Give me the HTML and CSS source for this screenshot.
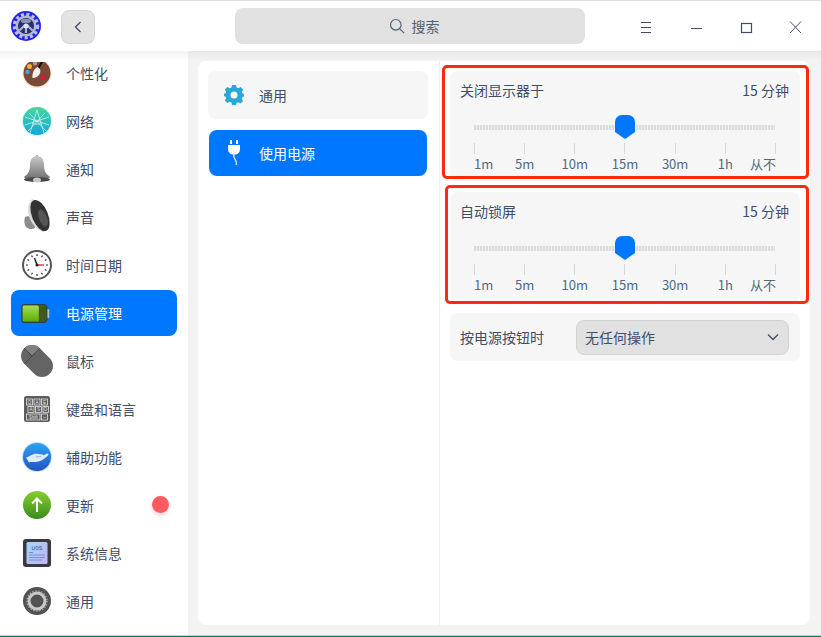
FILE: index.html
```html
<!DOCTYPE html>
<html lang="zh-CN">
  <head>
    <meta charset="UTF-8" />
    <title>控制中心</title>
    <link rel="stylesheet" href="styles.css">
  </head>
  <body>
    <div class="window">
      <!-- Title bar -->
      <div class="titlebar">
        <svg class="logo" viewBox="0 0 30 30">
          <circle cx="15" cy="15" r="15" fill="#2323e6"/>
          <circle cx="15" cy="15" r="11.500" fill="none" stroke="#b9bdf0" stroke-width="3.500" stroke-dasharray="3 2.420"/>
          <circle cx="15" cy="15" r="10.500" fill="#b4b7d2"/>
          <circle cx="15" cy="15" r="8" fill="#27306e"/>
          <ellipse cx="15" cy="10" rx="5" ry="2.200" fill="#8b91bd"/>
          <path d="M14 14 8.500 19.500M16 14 21.500 19.500M15 15v7" stroke="#aeb2d0" stroke-width="2.200"/>
          <circle cx="15" cy="15" r="2.500" fill="#e2e3ef"/>
        </svg>
        <button class="back-btn">
          <svg width="10" height="14" viewBox="0 0 10 14"><path d="M7.500 2 2.500 7l5 5" fill="none" stroke="#414d68" stroke-width="1.300"/></svg>
        </button>
        <div class="search">
          <svg width="16" height="16" viewBox="0 0 16 16"><circle cx="6.800" cy="6.800" r="5.300" fill="none" stroke="#526070" stroke-width="1.200"/><path d="m10.800 10.800 4.400 4.400" stroke="#526070" stroke-width="1.200"/></svg>
          <span>搜索</span>
        </div>
        <div class="win-buttons">
          <svg width="50" height="50" viewBox="0 0 50 50"><path d="M20 21.500h10M20 26.500h10M20 31.500h10" stroke="#414d68" stroke-width="1"/></svg>
          <svg width="50" height="50" viewBox="0 0 50 50"><path d="M20 27.500h11" stroke="#414d68" stroke-width="1"/></svg>
          <svg width="50" height="50" viewBox="0 0 50 50"><rect x="20.500" y="22.500" width="10" height="9" fill="none" stroke="#414d68" stroke-width="1.200"/></svg>
          <svg width="50" height="50" viewBox="0 0 50 50"><path d="m19 20.500 11 11.500M30 20.500 19 32" stroke="#414d68" stroke-width="1"/></svg>
        </div>
      </div>

      <div class="main">
        <!-- Sidebar -->
        <div class="sidebar">
          <div class="nav-item">
            <svg class="nav-icon" viewBox="0 0 28 28">
              <circle cx="14" cy="14.500" r="14.500" fill="#f3c9b0" opacity=".5"/>
              <circle cx="14" cy="14" r="13.500" fill="#7b4a35"/>
              <circle cx="6.500" cy="7.500" r="2.500" fill="#f2b13c"/><circle cx="4.500" cy="13" r="2.300" fill="#4d9be8"/><circle cx="20" cy="18" r="2.500" fill="#d9183c"/><circle cx="12" cy="4.500" r="2" fill="#b89a84"/>
              <path d="M21 -1 15.500 9" stroke="#111" stroke-width="2"/>
              <path d="M14.500 8c3.500 1.500 3.500 5 1.500 8-1.500 2-5 3.500-6.500 3-.5-3 .5-9 5-11Z" fill="#f4f1ec"/>
            </svg>
            <span>个性化</span>
          </div>
          <div class="nav-item">
            <svg class="nav-icon" viewBox="0 0 28 28">
              <defs><linearGradient id="net" x1="0" y1="0" x2="0" y2="1"><stop offset="0" stop-color="#45d89a"/><stop offset="1" stop-color="#12a8dc"/></linearGradient></defs>
              <circle cx="14" cy="14.500" r="15" fill="#7fdcf5" opacity=".35"/>
              <circle cx="14" cy="14" r="14" fill="url(#net)"/>
              <path d="M14 3 7 26M14 3l7 23M2 10l24 8M26 10 2 18M5 24 22 6M23 24 6 6M9 17h10" stroke="#dff8f2" stroke-width=".7" fill="none"/>
            </svg>
            <span>网络</span>
          </div>
          <div class="nav-item">
            <svg class="nav-icon" viewBox="0 0 28 28">
              <defs><linearGradient id="bell" x1="0" y1="0" x2="0" y2="1"><stop offset="0" stop-color="#c9c9c9"/><stop offset="1" stop-color="#6c6c6c"/></linearGradient></defs>
              <circle cx="14" cy="1.500" r="1.500" fill="#9a9a9a"/>
              <path d="M14 1c-5 0-7 4-7 9 0 6-2 9-6 12 0 1.500 6 3 13 3s13-1.500 13-3c-4-3-6-6-6-12 0-5-2-9-7-9Z" fill="url(#bell)"/>
              <ellipse cx="14" cy="24.500" rx="13" ry="2.500" fill="#4a4a4a"/>
              <ellipse cx="14" cy="25" rx="4" ry="2.500" fill="#c7c7c7"/>
            </svg>
            <span>通知</span>
          </div>
          <div class="nav-item">
            <svg class="nav-icon" viewBox="0 0 28 28">
              <path d="M2 14c2-1 5-1 8 1l2 10c-3 2-7 1-9-1-2-3-2-7-1-10Z" fill="#8d8d8d"/>
              <path d="M9 -4C4 2 4 11 8 18c3 6 8 10 13 11l5-6C26 10 18-1 9-4Z" fill="#d8d8d8"/>
              <ellipse cx="17" cy="12.500" rx="8" ry="16.500" transform="rotate(-22 17 12.500)" fill="#333"/>
              <ellipse cx="20" cy="15" rx="4" ry="9" transform="rotate(-22 20 15)" fill="#555"/>
            </svg>
            <span>声音</span>
          </div>
          <div class="nav-item">
            <svg class="nav-icon nav-icon-lg" viewBox="0 0 30 30">
              <circle cx="15" cy="15" r="14" fill="#fdfdfd" stroke="#555" stroke-width="2"/>
              <path d="M15 4v2M15 24v2M4 15h2M24 15h2M9.500 5.500l1 1.700M20.500 5.500l-1 1.700M9.500 24.500l1-1.700M20.500 24.500l-1-1.700M5.500 9.500l1.700 1M24.500 9.500l-1.700 1M5.500 20.500l1.700-1M24.500 20.500l-1.700-1" stroke="#333" stroke-width="1.200"/>
              <path d="M15 15 12.500 8" stroke="#222" stroke-width="1.500"/>
              <path d="M15 15h7" stroke="#ee3b3b" stroke-width="1.500"/>
              <circle cx="15" cy="15" r="1.500" fill="#222"/>
            </svg>
            <span>时间日期</span>
          </div>
          <div class="nav-item active">
            <svg class="nav-icon battery" viewBox="0 0 30 20">
              <defs><linearGradient id="charge" x1="0" y1="0" x2="0" y2="1"><stop offset="0" stop-color="#a6dc55"/><stop offset="1" stop-color="#5cae06"/></linearGradient></defs>
              <rect x="26" y="5.500" width="3.500" height="9" fill="#b7bcc4"/>
              <rect x=".5" y=".5" width="26.500" height="19" rx="3" fill="#3f5a1c" stroke="#2c3d4a"/>
              <rect x="1.500" y="1.500" width="17" height="17" rx="1.500" fill="url(#charge)"/>
            </svg>
            <span>电源管理</span>
          </div>
          <div class="nav-item">
            <svg class="nav-icon" viewBox="0 0 28 28">
              <g transform="rotate(45 14 14)">
                <rect x="-4" y="3" width="36" height="22" rx="11" fill="#646464"/>
                <path d="M7 3H7a11 11 0 0 0-11 11v0H7Z M7 3v11h0V3Z" fill="#808080"/>
                <path d="M7 25V3M-4 14H7" stroke="#3d3d3d" stroke-width=".8"/>
              </g>
            </svg>
            <span>鼠标</span>
          </div>
          <div class="nav-item">
            <svg class="nav-icon" viewBox="0 0 28 28">
              <rect x="1" y="1" width="26" height="26" rx="2.500" fill="#5c5c5c"/>
              <g fill="none" stroke="#e4e4e4" stroke-width=".8">
                <rect x="3.500" y="4" width="6" height="6"/><rect x="11" y="4" width="6" height="6"/><rect x="18.500" y="4" width="6" height="6"/>
                <rect x="5" y="11.500" width="6" height="6"/><rect x="12.500" y="11.500" width="6" height="6"/><rect x="20" y="11.500" width="5.500" height="6"/>
                <rect x="3.500" y="19" width="13.500" height="6"/><rect x="18.500" y="19" width="6" height="6"/>
              </g>
              <g class="key-text">
                <text x="6.500" y="8.800">Q</text><text x="14" y="8.800">A</text><text x="21.500" y="8.800">E</text>
                <text x="8" y="16.300">A</text><text x="15.500" y="16.300">S</text><text x="22.700" y="16.300">D</text>
                <text x="10.200" y="23.800">Shift</text><text x="21.500" y="23.800">~</text>
              </g>
            </svg>
            <span>键盘和语言</span>
          </div>
          <div class="nav-item">
            <svg class="nav-icon nav-icon-lg" viewBox="0 0 30 30">
              <defs><linearGradient id="hand" x1="0" y1="0" x2="0" y2="1"><stop offset="0" stop-color="#2ea3f2"/><stop offset="1" stop-color="#2352c4"/></linearGradient></defs>
              <circle cx="15" cy="15" r="15" fill="#7fc0fa" opacity=".5"/>
              <circle cx="15" cy="15" r="14" fill="url(#hand)"/>
              <path d="M4 15.500c3-.5 5-3 8-3.500 3-.5 5 .5 8 .5 2 0 1.500 2-1 2l-5 .3 5-.3 6-3c1.500-.5 2 1 1 2-3 3-7 6-12 6.500-3 .3-5-.5-7 .5Z" fill="#dcecfb"/>
              <path d="M14 14.800c2 .2 3.500 0 5-.3" fill="none" stroke="#5b9be0" stroke-width=".7"/>
            </svg>
            <span>辅助功能</span>
          </div>
          <div class="nav-item">
            <svg class="nav-icon" viewBox="0 0 28 28">
              <defs><linearGradient id="upd" x1="0" y1="0" x2="0" y2="1"><stop offset="0" stop-color="#86d02e"/><stop offset="1" stop-color="#3a8a1d"/></linearGradient></defs>
              <circle cx="14" cy="14" r="14" fill="url(#upd)"/>
              <path d="M14 21V8M9 12.500 14 7.500l5 5" fill="none" stroke="#fff" stroke-width="2"/>
            </svg>
            <span>更新</span>
            <i class="badge"></i>
          </div>
          <div class="nav-item">
            <svg class="nav-icon" viewBox="0 0 28 28">
              <defs><linearGradient id="uos" x1="0" y1="0" x2="1" y2="1"><stop offset="0" stop-color="#9fd6f4"/><stop offset="1" stop-color="#c5b5f5"/></linearGradient></defs>
              <rect width="28" height="28" rx="3" fill="#3a3a3e"/>
              <rect x="3.500" y="3" width="21" height="22" rx="1.500" fill="url(#uos)"/>
              <text x="14" y="10.500" class="uos-text">UOS</text>
              <path d="M6 13.500h4M6 16h16M6 18.500h16M6 21h13" stroke="#5b7bbd" stroke-width=".7"/>
            </svg>
            <span>系统信息</span>
          </div>
          <div class="nav-item">
            <svg class="nav-icon" viewBox="0 0 28 28">
              <circle cx="14" cy="14" r="14" fill="#525252"/>
              <circle cx="14" cy="14" r="8" fill="none" stroke="#c9c9c9" stroke-width="3"/>
              <circle cx="14" cy="14" r="10" fill="none" stroke="#a5a5a5" stroke-width="1.500" stroke-dasharray="1.500 1.500"/>
            </svg>
            <span>通用</span>
          </div>
        </div>

        <!-- Content panel -->
        <div class="panel">
          <div class="sub-list">
            <div class="sub-item">
              <svg width="20" height="20" viewBox="0 0 20 20"><path fill="#2aa8d8" fill-rule="evenodd" d="M8 0h4l.6 2.600 1.700.7 2.300-1.400 2.600 2.600-1.400 2.300.7 1.700L21 9v2l-2.500 1-.7 1.700 1.300 2.300-2.600 2.600-2.300-1.300-1.700.7L12 20H8l-.6-2.500-1.700-.7-2.300 1.300L.8 15.500l1.400-2.200-.7-1.700L-1 11V9l2.500-.6.700-1.700L.8 4.500l2.600-2.600 2.300 1.400 1.700-.7Zm2 6.500a3.500 3.500 0 1 0 0 7 3.500 3.500 0 0 0 0-7Z"/></svg>
              <span>通用</span>
            </div>
            <div class="sub-item active">
              <svg width="20" height="26" viewBox="0 0 20 26"><path fill="#fff" d="M6 0h2v4H6zM12 0h2v4h-2zM4 5h12v4a6 6 0 0 1-4 5.500H8A6 6 0 0 1 4 9Z"/><path d="M10 14c-1 3 0 4 1.500 6 1 1.500 1 3 1 5" fill="none" stroke="#fff" stroke-width="1.200"/></svg>
              <span>使用电源</span>
            </div>
          </div>

          <div class="settings">
            <div class="card card-slider mark-display">
              <div class="card-head"><span>关闭显示器于</span><span>15 分钟</span></div>
              <div class="slider">
                <div class="track"></div>
                <svg class="thumb" width="20" height="24" viewBox="0 0 20 24"><path fill="#0077ff" d="M7 0h6a7 7 0 0 1 7 7v10l-10 7-10-7V7a7 7 0 0 1 7-7Z"/></svg>
              </div>
              <div class="scale">
                <div class="tick"><span>1m</span></div>
                <div class="tick"><span>5m</span></div>
                <div class="tick"><span>10m</span></div>
                <div class="tick"><span>15m</span></div>
                <div class="tick"><span>30m</span></div>
                <div class="tick"><span>1h</span></div>
                <div class="tick"><span>从不</span></div>
              </div>
            </div>

            <div class="card card-slider mark-lock">
              <div class="card-head"><span>自动锁屏</span><span>15 分钟</span></div>
              <div class="slider">
                <div class="track"></div>
                <svg class="thumb" width="20" height="24" viewBox="0 0 20 24"><path fill="#0077ff" d="M7 0h6a7 7 0 0 1 7 7v10l-10 7-10-7V7a7 7 0 0 1 7-7Z"/></svg>
              </div>
              <div class="scale">
                <div class="tick"><span>1m</span></div>
                <div class="tick"><span>5m</span></div>
                <div class="tick"><span>10m</span></div>
                <div class="tick"><span>15m</span></div>
                <div class="tick"><span>30m</span></div>
                <div class="tick"><span>1h</span></div>
                <div class="tick"><span>从不</span></div>
              </div>
            </div>

            <div class="card card-select">
              <span>按电源按钮时</span>
              <div class="select">
                <span>无任何操作</span>
                <svg width="12" height="8" viewBox="0 0 12 8"><path d="M1 1.500 6 6.500l5-5" fill="none" stroke="#414d68" stroke-width="1.300"/></svg>
              </div>
            </div>
          </div>
        </div>
      </div>
      <div class="bottom-line"></div>
    </div>
  </body>
</html>
```

FILE: styles.css
```css
* {
  margin: 0;
  padding: 0;
  box-sizing: border-box;
}

html,
body {
  height: 100%;
}

body {
  font-family: "Noto Sans CJK SC", "Noto Sans", sans-serif;
  font-size: 14px;
  color: #414d68;
  background: #f3f3f3;
  overflow: hidden;
}

.window {
  height: 637px;
  display: flex;
  flex-direction: column;
  border-top: 1px solid #dedede;
}

/* Title bar */
.titlebar {
  height: 50px;
  flex: none;
  display: flex;
  align-items: center;
  background: #fff;
  position: relative;
  z-index: 2;
  padding-left: 11px;
}

.titlebar::after {
  content: "";
  position: absolute;
  left: 0;
  right: 0;
  top: 100%;
  height: 10px;
  background: linear-gradient(rgba(0, 0, 0, 0.05), rgba(0, 0, 0, 0));
}

.logo {
  width: 30px;
  height: 30px;
}

.back-btn {
  width: 34px;
  height: 34px;
  margin-left: 20px;
  margin-top: 2px;
  display: flex;
  align-items: center;
  justify-content: center;
  background: #e3e3e3;
  border: 1px solid #d6d6d6;
  border-radius: 8px;
}

.search {
  width: 350px;
  height: 36px;
  margin-left: 140px;
  padding-left: 8px;
  display: flex;
  align-items: center;
  justify-content: center;
  gap: 7px;
  background: #e1e1e1;
  border-radius: 8px;
  color: #526070;
}

.win-buttons {
  display: flex;
  margin-left: 36px;
}

/* Sidebar */
.main {
  flex: 1;
  display: flex;
  min-height: 0;
}

.sidebar {
  width: 188px;
  flex: none;
  background: #fff;
  margin-top: -1px;
  padding: 0 11px;
  display: flex;
  flex-direction: column;
  gap: 2px;
}

.nav-item {
  height: 46px;
  flex: none;
  display: flex;
  align-items: center;
  gap: 15px;
  padding-left: 12px;
  border-radius: 8px;
  position: relative;
}

.nav-item.active {
  background: #0077ff;
  color: #fff;
}

.nav-icon {
  width: 28px;
  height: 28px;
  flex: none;
  overflow: visible;
}

.nav-icon-lg {
  width: 30px;
  height: 30px;
  margin: 0 -1px;
}

.battery {
  width: 29px;
  height: 19px;
  margin-left: -2px;
  margin-right: 1px;
}

.nav-item:first-child .nav-icon {
  clip-path: inset(3px -2px -3px -2px);
}

.key-text {
  font-family: "Liberation Sans", sans-serif;
  font-size: 4.500px;
  text-anchor: middle;
  fill: #e4e4e4;
}

.uos-text {
  font-family: "Liberation Mono", monospace;
  font-size: 6px;
  text-anchor: middle;
  fill: #4a5a80;
}

.badge {
  position: absolute;
  right: 8px;
  top: 14px;
  width: 17px;
  height: 17px;
  border-radius: 50%;
  background: #ff5a5f;
  box-shadow: 0 2px 4px rgba(255, 90, 95, 0.3);
}

/* Content panel */
.panel {
  width: 612px;
  height: 564px;
  margin: 10px 0 0 10px;
  display: flex;
  background: #fff;
  border-radius: 8px;
}

.sub-list {
  width: 242px;
  flex: none;
  padding: 10px 11px 10px 10px;
  border-right: 1px solid #f0f0f0;
  display: flex;
  flex-direction: column;
  gap: 11px;
}

.sub-item {
  height: 48px;
  display: flex;
  align-items: center;
  gap: 15px;
  padding-left: 16px;
  border-radius: 8px;
  background: #f6f6f6;
}

.sub-item.active {
  height: 46px;
  margin: 0 1px;
  padding-left: 15px;
  background: #0077ff;
  color: #fff;
}

.settings {
  flex: 1;
  padding: 10px;
  display: flex;
  flex-direction: column;
  gap: 11px;
}

.card {
  background: #f6f6f6;
  border-radius: 8px;
  position: relative;
}

.card-slider {
  height: 110px;
  padding: 8px 11px 0 10px;
}

.card-head {
  display: flex;
  justify-content: space-between;
  line-height: 22px;
}

/* Red annotation frames */
.mark-display::after,
.mark-lock::after {
  content: "";
  position: absolute;
  border: 3px solid #ff2a0c;
  border-radius: 5px;
}

.mark-display::after {
  left: -8px;
  top: -6px;
  right: -9px;
  bottom: 2px;
}

.mark-lock::after {
  left: -5px;
  top: -7px;
  right: -9px;
  bottom: -2px;
}

.slider {
  position: relative;
  height: 24px;
  margin: 14px 14px 0 14px;
  display: flex;
  align-items: center;
}

.track {
  width: 100%;
  height: 5px;
  background: repeating-linear-gradient(90deg, #dcdcdc 0 2px, #eeeeee 2px 3px);
}

.thumb {
  position: absolute;
  left: 141px;
  top: 0;
}

.scale {
  margin: 4px 13px 0 14px;
  display: flex;
  justify-content: space-between;
}

.tick {
  width: 1px;
  height: 11px;
  background: #d8d8d8;
  display: flex;
  justify-content: center;
  position: relative;
}

.tick span {
  margin-top: 12px;
  font-size: 13px;
  line-height: 18px;
  color: #526a7f;
  white-space: nowrap;
  height: 18px;
}

.tick:first-child {
  justify-content: flex-start;
}

.tick:last-child {
  justify-content: flex-end;
}

.card-select {
  height: 48px;
  display: flex;
  align-items: center;
  justify-content: space-between;
  padding: 0 11px 0 10px;
}

.select {
  width: 213px;
  height: 35px;
  display: flex;
  align-items: center;
  justify-content: space-between;
  padding: 0 9px 0 8px;
  background: #e1e1e1;
  border: 1px solid #d4d4d4;
  border-radius: 8px;
}

.bottom-line {
  position: absolute;
  left: 0;
  right: 0;
  top: 635px;
  height: 2px;
  background: linear-gradient(#b5d8cc 50%, #0b7a5c 50%);
}
```
